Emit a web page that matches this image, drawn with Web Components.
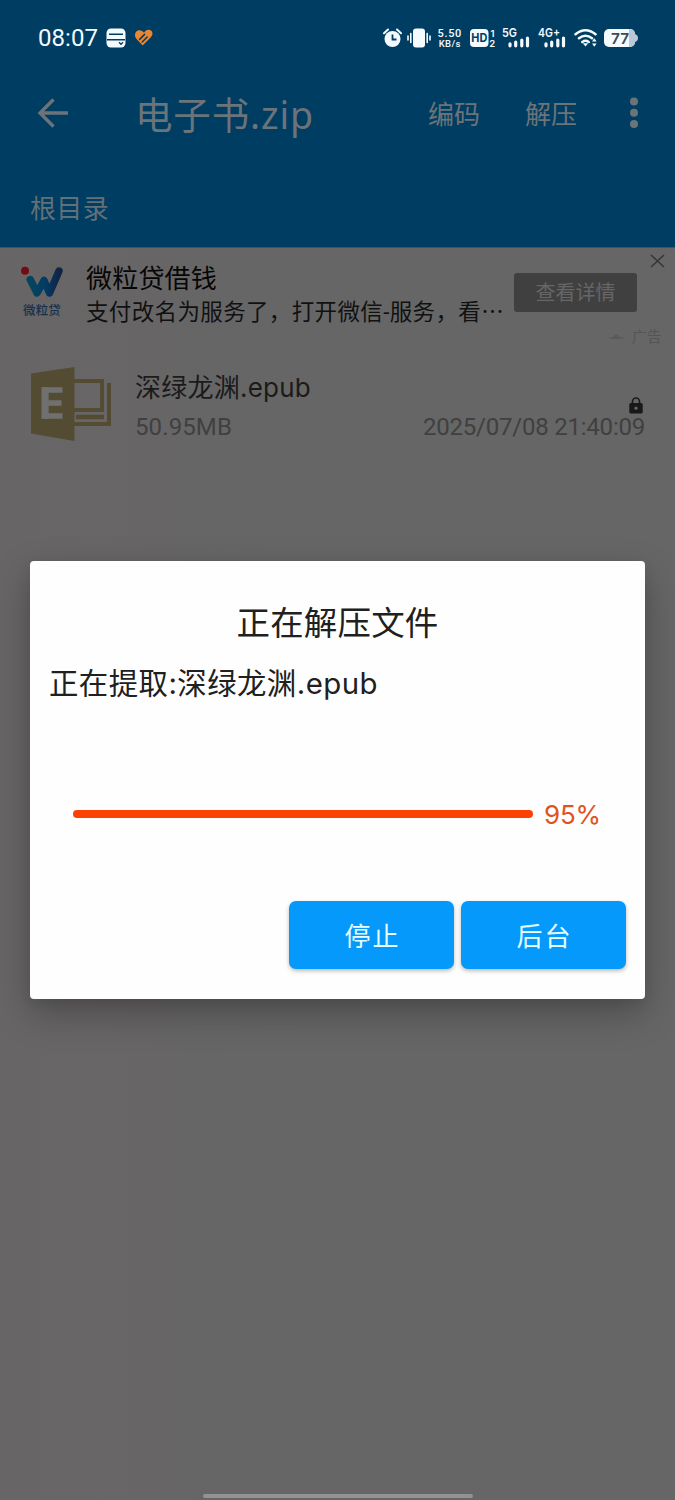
<!DOCTYPE html>
<html lang="zh-CN">
<head>
<meta charset="utf-8">
<title>电子书.zip</title>
<style>
html,body{margin:0;padding:0;height:1500px;overflow:hidden;background:#666}
body{font-family:Roboto,"Noto Sans CJK SC",sans-serif}
</style>
</head>
<body>
<archive-app></archive-app>
<script>
const define=(name,html,ready)=>customElements.define(name,class extends HTMLElement{
  connectedCallback(){
    if(!this.shadowRoot){const t=document.createElement('template');t.innerHTML=html;this.attachShadow({mode:'open'}).append(t.content.cloneNode(true));}
    if(ready)ready(this);
  }
});

/* A one-line label; "w" is the advance width its letters are tracked to. */
define('ui-label','<style>:host{display:block;white-space:nowrap;flex:none}span{display:inline-block}</style><span><slot></slot></span>',el=>{
  const w=+el.getAttribute('w'),s=el.shadowRoot.querySelector('span');
  if(!w)return;
  const n=[...el.textContent].length;
  s.style.letterSpacing=((w-s.getBoundingClientRect().width)/n)+'px';
  el.style.width=w+'px';
});

define('status-bar',`<style>
:host{display:flex;height:76px;box-sizing:border-box;padding:0 37px 0 38px;align-items:center;color:#f4fbff}
.time{font-size:24px;line-height:30px}
svg{display:block;flex:none}
.left{display:flex;align-items:center;gap:9px;flex:1}
.right{display:flex;align-items:center}
.speed{display:grid;font-weight:500;justify-items:center;margin:0 7px 0 7px}
.speed>:first-child{font-size:11px;line-height:13px;height:11px}
.speed>:last-child{font-size:9.5px;line-height:11px}
text{font-family:Inter,Roboto,sans-serif;font-weight:600}
</style>
<div class="left"><ui-label class="time" w="60">08:07</ui-label>
<svg width="20" height="20" viewBox="0 0 20 20" style="margin-left:-1px"><rect x=".5" y=".5" width="19" height="19" rx="4.5" fill="#f4fbff"/><path d="M3 6.2H17M1 11.8H19" stroke="#003d62" stroke-width="1.6"/><path d="M13 14.3l2 2 2-2" fill="none" stroke="#003d62" stroke-width="1.3"/></svg>
<svg width="20" height="18" viewBox="0 0 20 18" style="margin-left:-1px"><path d="M10 3.8C8 .6 3.8.4 1.8 3.2.2 5.8 1.2 8.5 3 10.4l5.7 6.1L16.8 8.2C20.2 4.5 18 .8 14.6.8 12.7.8 11.2 2 10 3.8Z" fill="#e78734"/><path d="M5.6 10.4 10.6 5.4M8.2 13l5-5" stroke="#003d62" stroke-width="1.5" stroke-linecap="round" fill="none"/></svg></div>
<div class="right">
<svg width="19" height="20" viewBox="0 0 19 20"><circle cx="9.5" cy="11" r="8" fill="#f4fbff"/><path d="M1 5.2 5 1.5M18 5.2 14 1.5" stroke="#f4fbff" stroke-width="2" stroke-linecap="round"/><path d="M9.5 6.5v5h4" fill="none" stroke="#003d62" stroke-width="1.8"/></svg>
<svg width="24" height="20" viewBox="0 0 24 20" style="margin-left:5px"><rect x="6" y=".5" width="12" height="19" rx="3" fill="#f4fbff"/><path d="M3.8 5.5v9M20.2 5.5v9M1 8v4M23 8v4" stroke="#f4fbff" stroke-width="1.6" stroke-linecap="round"/></svg>
<div class="speed"><ui-label w="24.5">5.50</ui-label><ui-label w="22">KB/s</ui-label></div>
<svg width="28" height="30" viewBox="0 -4 28 30"><rect x="1" y="2" width="18.5" height="18" rx="4" fill="#f4fbff"/><text x="2.3" y="15.3" font-size="12" textLength="16" lengthAdjust="spacingAndGlyphs" style="font-weight:700" fill="#003d62">HD</text><text x="21.5" y="9.5" font-size="9.5" fill="#f4fbff">1</text><text x="20.3" y="20" font-size="9.5" fill="#f4fbff">2</text></svg>
<svg width="29" height="30" viewBox="0 -4 29 30" style="margin-left:4px"><text x="1" y="10" font-size="12" textLength="15" lengthAdjust="spacingAndGlyphs" fill="#f4fbff">5G</text><path d="M9 16.8v2M14.7 15.2v3.6M20.8 13v5.8M26.5 11v7.8" stroke="#f4fbff" stroke-width="3.2" stroke-linecap="round"/></svg>
<svg width="29" height="30" viewBox="0 -4 29 30" style="margin-left:7px"><text x="1" y="10" font-size="12" textLength="22" lengthAdjust="spacingAndGlyphs" fill="#f4fbff">4G+</text><path d="M9 16.8v2M14.7 15.2v3.6M20.8 13v5.8M26.5 11v7.8" stroke="#f4fbff" stroke-width="3.2" stroke-linecap="round"/></svg>
<svg width="24" height="20" viewBox="0 0 24 20" style="margin-left:8px"><path d="M1.5 6.3q10-8.2 20 0M5 10.3q6.5-5.2 13 0M8.3 14q3.2-2.4 6.4 0" stroke="#f4fbff" stroke-width="2.5" stroke-linecap="round" fill="none"/><path d="M8.8 15.2h5.4L11.5 18.5z" fill="#f4fbff"/><path d="M18 13.5l2.3-3.2 2.3 3.2zM18 15.5l2.3 3.2 2.3-3.2z" fill="#f4fbff"/></svg>
<svg width="34" height="18" viewBox="0 0 34 18" style="margin-left:6px"><path d="M5 0H26a5 5 0 0 1 5 5V13a5 5 0 0 1-5 5H5a5 5 0 0 1-5-5V5a5 5 0 0 1 5-5Z" fill="#f4fbff"/><path d="M25 0h1a5 5 0 0 1 5 5q3 1 3 4t-3 4a5 5 0 0 1-5 5h-1Z" fill="#b8c9d5"/><text x="7" y="14.5" font-size="15" textLength="18" lengthAdjust="spacingAndGlyphs" style="font-weight:600" fill="#404b51">77</text></svg>
</div>`);

define('app-bar',`<style>
:host{display:flex;height:76px;align-items:center;color:#6b7479;font-size:26px;line-height:38px}
svg{flex:none}
.back{margin:0 0 2px 37px}
.title{margin-left:67px;font-size:37.5px;line-height:54px;flex:1;padding-top:1px;font-family:"Noto Sans","Noto Sans CJK SC",sans-serif}
.action{padding-top:2px}
.more{margin:0 36px 2px 52px}
</style>
<svg class="back" width="31" height="30" viewBox="0 0 31 30"><path d="M31 15H3M16.5 1.5 3 15 16.5 28.5" fill="none" stroke="#6b7479" stroke-width="3.4"/></svg>
<div class="title"><ui-label w="179">电子书.zip</ui-label></div>
<ui-label class="action" w="52">编码</ui-label><ui-label class="action" w="52" style="margin-left:45px">解压</ui-label>
<svg class="more" width="10" height="32" viewBox="0 0 10 32"><g fill="#6b7479"><circle cx="5" cy="4.6" r="4"/><circle cx="5" cy="15.8" r="4"/><circle cx="5" cy="27" r="4"/></g></svg>`);

define('path-bar',`<style>:host{display:flex;height:95px;box-sizing:border-box;padding:38px 0 0 30px;color:#627078;font-size:26px;line-height:38px}</style><ui-label w="79">根目录</ui-label>`);

define('ad-banner',`<style>
:host{display:grid;grid-template-columns:86px 428px 123px 38px;height:103px;color:#060606}
.logo{display:grid;justify-items:center;align-content:start;padding-top:18px;width:84px}
.logo svg{display:block}
.brand{font-size:12.5px;line-height:18px;color:#16304d;font-weight:500;margin-top:4px}
.copy{padding-top:12px}
.copy>:first-child{font-size:26px;line-height:38px}
.copy>:last-child{font-size:22.5px;line-height:28px;color:#111}
.cta{height:39px;margin-top:25px;background:#404040;border-radius:3px;display:grid;place-items:center;color:#666;font-size:20px;line-height:28px}
.side{display:flex;flex-direction:column;align-items:flex-end}
.close{margin:6px 10px 0 0;flex:none}
.tag{display:flex;align-items:center;gap:7px;width:54px;flex:none;height:20px;color:#555;font-size:14.5px;line-height:20px;margin:60px 13px 0 0}
</style>
<div class="logo"><svg width="44" height="32" viewBox="0 0 44 32"><defs><linearGradient id="g" x2="1"><stop stop-color="#04455e"/><stop offset=".5" stop-color="#043c63"/><stop offset="1" stop-color="#112447"/></linearGradient></defs><circle cx="5" cy="4.8" r="4" fill="#750b12"/><path d="M10.2 13.5 17 27 24 14.5 29.5 27 39 5" fill="none" stroke="url(#g)" stroke-width="7.4" stroke-linecap="round" stroke-linejoin="round"/></svg><ui-label class="brand" w="38">微粒贷</ui-label></div>
<div class="copy"><ui-label w="131">微粒贷借钱</ui-label><ui-label w="418">支付改名为服务了，打开微信-服务，看⋯</ui-label></div>
<div class="cta"><ui-label w="80">查看详情</ui-label></div>
<div class="side"><svg class="close" width="15" height="14" viewBox="0 0 15 14"><path d="M1 1 14 13M14 1 1 13" stroke="#353535" stroke-width="1.5"/></svg>
<div class="tag"><svg width="17" height="8" viewBox="0 0 17 8" style="flex:none"><path d="M0 4 5 3Q8.5-2 12 3l5 1-4 1H4Z" fill="#5a5a5a"/></svg><ui-label w="30">广告</ui-label></div></div>`);

define('file-row',`<style>
:host{display:grid;grid-template-columns:135px 1fr auto;padding:17px 30px 0 0;height:100px;box-sizing:border-box;color:#1b1b1b}
.icon{margin:-1px 0 0 31px}
.name{font-size:26px;line-height:40px;font-family:Inter,"Noto Sans CJK SC",sans-serif}
.meta{font-size:24px;line-height:28px;color:#404040}
.info{display:grid;grid-template-rows:45px 28px;align-items:start}
.lock{justify-self:end;align-self:end;margin:0 2px -1px 0}
</style>
<svg class="icon" width="81" height="74" viewBox="0 0 81 74"><path d="M0 6.5 43.5 0V74L0 66.5Z" fill="#534c32"/><path d="M43 14H71V43H43M43 57H78V16" fill="none" stroke="#534c32" stroke-width="4"/><path d="M45 50H73" stroke="#534c32" stroke-width="4.5"/><path d="M31.5 23H14.5V49H31.5M14.5 36H30.5" fill="none" stroke="#707070" stroke-width="5.5"/><path d="M14 20.2V51.8" stroke="#707070" stroke-width="7"/></svg>
<div class="info"><ui-label class="name" w="176">深绿龙渊.epub</ui-label><ui-label class="meta" w="97">50.95MB</ui-label></div>
<div class="info"><svg class="lock" width="14" height="17" viewBox="0 0 14 17"><path d="M3.5 7V4.5a3.5 3.5 0 0 1 7 0V7" fill="none" stroke="#191919" stroke-width="1.6"/><rect x=".3" y="6" width="13.4" height="10.5" rx="1.5" fill="#191919"/><circle cx="7" cy="11.2" r="1.6" fill="#666"/></svg><ui-label class="meta" w="222">2025/07/08 21:40:09</ui-label></div>`);

define('dialog-button',`<style>:host{width:165px;height:68px;border-radius:7px;background:#0499fb;color:#e8ffff;display:grid;place-items:center;font-size:26px;line-height:38px;box-shadow:0 2px 4px #0004;padding-top:3px;box-sizing:border-box}</style><ui-label w="57" style="margin-left:3px"><slot></slot></ui-label>`,el=>{
  el.shadowRoot.querySelector('ui-label').shadowRoot.querySelector('span').style.letterSpacing='2px';
});

define('progress-line',`<style>
:host{display:flex;align-items:center;color:#df541d;font-size:26px;line-height:32px;font-family:Inter,Roboto,sans-serif}
i{width:460px;height:8px;border-radius:4px;background:#fc4103;margin-right:11px;margin-top:-3px}
</style><i></i><ui-label w="57">95%</ui-label>`);

define('extract-dialog',`<style>
:host{position:absolute;left:30px;top:561px;width:615px;height:438px;box-sizing:border-box;background:#fefefe;border-radius:4px;color:#202020;box-shadow:0 14px 36px #0004,0 4px 12px #0001;display:flex;flex-direction:column}
.title{align-self:center;font-size:33.5px;line-height:50px;margin-top:38px}
.msg{font-size:29.4px;line-height:44px;margin:13px 0 0 19px;font-family:Inter,"Noto Sans CJK SC",sans-serif}
progress-line{margin:93px 0 0 43px}
.actions{display:flex;justify-content:flex-end;gap:7px;margin:70px 19px 0 0}
</style>
<ui-label class="title" w="202">正在解压文件</ui-label>
<ui-label class="msg" w="329">正在提取:深绿龙渊.epub</ui-label>
<progress-line></progress-line>
<div class="actions"><dialog-button>停止</dialog-button><dialog-button>后台</dialog-button></div>`);

define('archive-app',`<style>
:host{display:flex;flex-direction:column;width:675px;height:1500px;position:relative;background:linear-gradient(90deg,#686566,#666 45%)}
header{background:#003d62;border-bottom:1px solid #35566b;box-sizing:border-box;height:248px}
main{flex:1}
footer{height:6px;display:grid;justify-content:center}
footer i{width:270px;height:4px;border-radius:2px;background:#929292}
</style>
<header><status-bar></status-bar><app-bar></app-bar><path-bar></path-bar></header>
<main><ad-banner></ad-banner><file-row></file-row></main>
<footer><i></i></footer>
<extract-dialog></extract-dialog>`);
</script>
</body>
</html>
